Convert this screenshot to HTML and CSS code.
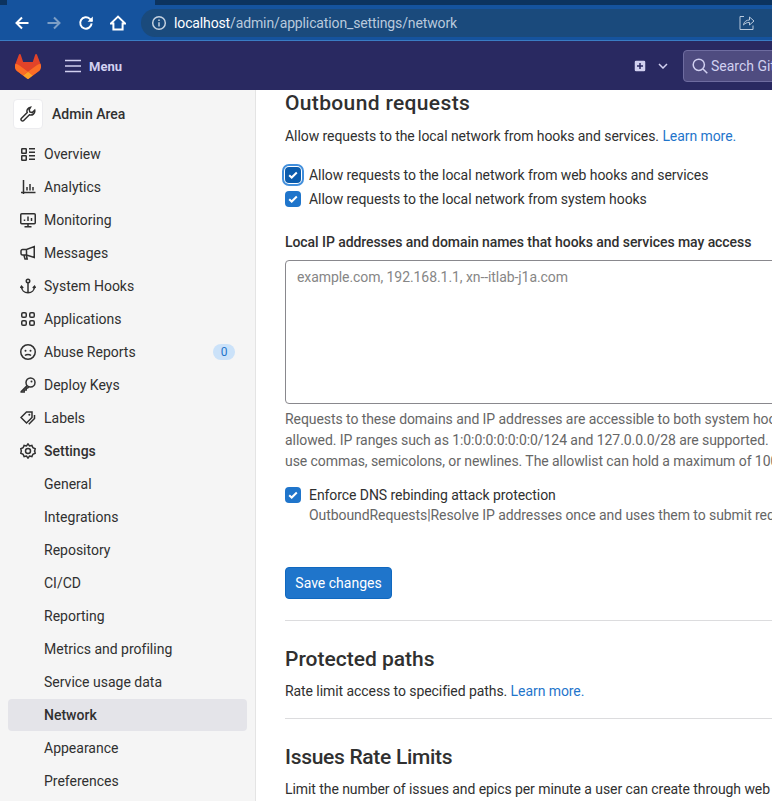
FILE: index.html
```html
<!DOCTYPE html>
<html lang="en">
<head>
  <meta charset="UTF-8" />
  <meta name="viewport" content="width=device-width, initial-scale=1" />
  <title>Network · Settings · Admin Area · GitLab</title>
  <link rel="stylesheet" href="styles.css">
</head>
<body>
  <div class="browser">
    <div class="tabstrip"><div class="tab"></div></div>
    <div class="toolbar">
      <svg class="tool tool-back" viewBox="0 0 16 16"><path d="M14.5 8H2.5M8 2.5 2.5 8 8 13.5"/></svg>
      <svg class="tool tool-forward" viewBox="0 0 16 16"><path d="M1.5 8h12M8 2.5 13.5 8 8 13.5"/></svg>
      <svg class="tool tool-reload" viewBox="0 0 16 16"><path d="M13.6 8.4A5.7 5.7 0 1 1 11.9 3.9L14 6"/><path class="solid" d="M14.8 1.6v5.2H9.6z"/></svg>
      <svg class="tool tool-home" viewBox="0 0 16 16"><path d="M8 1.6 1 8.4h2.4v6.2h9.2V8.4H15z"/></svg>
      <div class="omnibox">
        <svg class="omni-info" viewBox="0 0 16 16"><circle cx="8" cy="8" r="6.3"/><path d="M8 7.2v4.2M8 4.4v1.5"/></svg>
        <span class="url"><b>localhost</b>/admin/application_settings/network</span>
        <svg class="omni-share" viewBox="0 0 16 16"><path d="M5 1.5H1v13h13v-4"/><path d="M4.5 10c.4-3.4 3-5 6-5V2l4.5 4-4.5 4V7.4c-2.400 0-4.500.8-6 2.600z"/></svg>
        <svg class="omni-star" viewBox="0 0 16 16"><path d="m8 1.500 2 4.500 4.800.5-3.600 3.200 1 4.800L8 12.100l-4.200 2.400 1-4.800L1.200 6.500 6 6z"/></svg>
      </div>
    </div>
  </div>

  <header class="navbar">
    <svg class="logo" viewBox="0 0 25 24">
      <path d="M24.507 9.5l-.034-.09L21.082.562a.896.896 0 00-1.694.091l-2.29 7.01H7.825L5.535.653a.898.898 0 00-1.694-.09L.451 9.411.416 9.5a6.297 6.297 0 002.09 7.278l.012.01.03.022 5.16 3.867 2.56 1.935 1.554 1.176a1.051 1.051 0 001.268 0l1.555-1.176 2.56-1.935 5.197-3.89.014-.01A6.297 6.297 0 0024.507 9.5z" fill="#E24329"/>
      <path d="M24.507 9.5l-.034-.09a11.44 11.44 0 00-4.56 2.051l-7.447 5.632 4.742 3.584 5.197-3.89.014-.01A6.297 6.297 0 0024.507 9.5z" fill="#FC6D26"/>
      <path d="M7.707 20.677l2.56 1.935 1.555 1.176a1.051 1.051 0 001.268 0l1.555-1.176 2.56-1.935-4.743-3.584-4.755 3.584z" fill="#FCA326"/>
      <path d="M5.01 11.461a11.43 11.43 0 00-4.56-2.05L.416 9.5a6.297 6.297 0 002.09 7.278l.012.01.03.022 5.16 3.867 4.745-3.584-7.444-5.632z" fill="#FC6D26"/>
    </svg>
    <div class="menu">
      <svg class="menu-bars" viewBox="0 0 16 16"><path d="M0 2.500h16M0 8h16M0 13.500h16"/></svg>
      <span>Menu</span>
    </div>
    <div class="nav-right">
      <svg class="plus" viewBox="0 0 12 12"><rect width="12" height="12" rx="2"/><path d="M6 3v6M3 6h6"/></svg>
      <svg class="caret" viewBox="0 0 10 6"><path d="M1 1l4 4 4-4"/></svg>
      <div class="search">
        <svg viewBox="0 0 16 16"><circle cx="6.800" cy="6.800" r="5.600"/><path d="M11 11l4.300 4.300"/></svg>
        <span>Search GitLab</span>
      </div>
    </div>
  </header>

  <div class="layout">
    <aside class="sidebar">
      <div class="side-head">
        <span class="avatar">
          <svg class="icon" viewBox="0 0 16 16"><path d="M10.600 1.200a4 4 0 0 0-3.400 5.400L1.500 12.300a1.500 1.500 0 0 0 2.200 2.200l5.700-5.700a4 4 0 0 0 5.300-4.600l-2.500 2.400-2.400-.6-.6-2.400z"/></svg>
        </span>
        <span>Admin Area</span>
      </div>
      <nav class="side-list">
        <a class="side-item">
          <svg class="icon" viewBox="0 0 16 16"><rect x="1.750" y="2.750" width="4.500" height="4.500" rx=".5"/><rect x="1.750" y="9.750" width="4.500" height="4.500" rx=".5"/><path d="M9 2.750h6M9 6.250h6M9 9.750h6M9 13.250h6"/></svg>
          Overview</a>
        <a class="side-item">
          <svg class="icon" viewBox="0 0 16 16"><path d="M3.500 1v14M1 13.500h14.500M7 8v3.500M10 5v6.500M13 8v3.500"/></svg>
          Analytics</a>
        <a class="side-item">
          <svg class="icon" viewBox="0 0 16 16"><rect x=".75" y="1.750" width="14.500" height="10" rx="1"/><path d="M4.500 9V7.500M8 9V4.500M11.500 9V6M8 12v2.500M4.500 14.750h7"/></svg>
          Monitoring</a>
        <a class="side-item">
          <svg class="icon" viewBox="0 0 16 16"><path d="M14.250 1.500v11L6.500 10H2.500a1.500 1.500 0 0 1-1.500-1.500V6a1.500 1.500 0 0 1 1.500-1.500h4zM6.500 4.500V10M4 10.500l1 3.500h2.200l-.8-3.500"/></svg>
          Messages</a>
        <a class="side-item">
          <svg class="icon" viewBox="0 0 16 16"><circle cx="8" cy="3" r="1.750"/><path d="M8 4.750V15M1.500 8.500c0 3.800 2.800 6.250 6.500 6.250s6.500-2.450 6.500-6.250M.5 10l1-1.750L3.200 10M12.800 10l1.700-1.750 1 1.750"/></svg>
          System Hooks</a>
        <a class="side-item">
          <svg class="icon" viewBox="0 0 16 16"><rect x="1.750" y="1.750" width="4.500" height="4.500" rx="1.250"/><rect x="9.750" y="1.750" width="4.500" height="4.500" rx="1.250"/><rect x="1.750" y="9.750" width="4.500" height="4.500" rx="1.250"/><rect x="9.750" y="9.750" width="4.500" height="4.500" rx="1.250"/></svg>
          Applications</a>
        <a class="side-item">
          <svg class="icon" viewBox="0 0 16 16"><circle cx="8" cy="8" r="7.250"/><path d="M5 11.500c1.500-1.500 4.500-1.500 6 0"/><path class="dot" d="M5.500 6.800h.01M10.500 6.800h.01"/></svg>
          Abuse Reports
          <span class="badge">0</span></a>
        <a class="side-item">
          <svg class="icon" viewBox="0 0 16 16"><circle cx="10.500" cy="5.500" r="4.500"/><path d="M7.200 8.500 1.200 14.500v.5h3v-2h2v-2h1.500l1-1.200"/><path class="dot" d="M11.500 4.500h.01"/></svg>
          Deploy Keys</a>
        <a class="side-item">
          <svg class="icon" viewBox="0 0 16 16"><path d="M1 7.500 6.500 2H12v5.500l-5.500 5.500z"/><path d="M14.500 5v3.500L8.800 14.200"/><path class="dot" d="M9.300 4.800h.01"/></svg>
          Labels</a>
        <a class="side-item is-bold">
          <svg class="icon" viewBox="0 0 16 16"><path d="M8 .9l1.500 2 2.400-.5 1 2.300 2.300 1-.5 2.300 0 0 .5 0-.5 0 .5 2.300-2.300 1-1 2.300-2.400-.5L8 15.100l-1.500-2-2.400.5-1-2.300-2.300-1 .5-2.300-.5-2.300 2.300-1 1-2.300 2.400.5z"/><circle cx="8" cy="8" r="2.500"/></svg>
          Settings</a>
        <a class="side-item sub">General</a>
        <a class="side-item sub">Integrations</a>
        <a class="side-item sub">Repository</a>
        <a class="side-item sub">CI/CD</a>
        <a class="side-item sub">Reporting</a>
        <a class="side-item sub">Metrics and profiling</a>
        <a class="side-item sub">Service usage data</a>
        <a class="side-item sub active">Network</a>
        <a class="side-item sub">Appearance</a>
        <a class="side-item sub">Preferences</a>
      </nav>
    </aside>

    <main class="content">
      <section class="block">
        <h4 class="h-wide">Outbound requests</h4>
        <p class="lead">Allow requests to the local network from hooks and services. <a class="link">Learn more.</a></p>
        <div class="checks">
          <label class="check">
            <span class="box focused"><svg viewBox="0 0 10 8"><path d="M1.200 4.200 3.700 6.500 8.800 1.500"/></svg></span>
            Allow requests to the local network from web hooks and services
          </label>
          <label class="check">
            <span class="box"><svg viewBox="0 0 10 8"><path d="M1.200 4.200 3.700 6.500 8.800 1.500"/></svg></span>
            Allow requests to the local network from system hooks
          </label>
        </div>
        <label class="field-label">Local IP addresses and domain names that hooks and services may access</label>
        <div class="textarea">example.com, 192.168.1.1, xn--itlab-j1a.com</div>
        <p class="help">Requests to these domains and IP addresses are accessible to both system hooks and web hooks even when local requests are not<br>allowed. IP ranges such as 1:0:0:0:0:0:0:0/124 and 127.0.0.0/28 are supported. Domain wildcards are not supported currently.<br>use commas, semicolons, or newlines. The allowlist can hold a maximum of 1000 entries.</p>
        <label class="check check-dns">
          <span class="box"><svg viewBox="0 0 10 8"><path d="M1.200 4.200 3.700 6.500 8.800 1.500"/></svg></span>
          Enforce DNS rebinding attack protection
        </label>
        <p class="check-help">OutboundRequests|Resolve IP addresses once and uses them to submit requests</p>
        <button class="btn" type="button">Save changes</button>
      </section>
      <section class="block">
        <h4>Protected paths</h4>
        <p class="lead lead-tight">Rate limit access to specified paths. <a class="link">Learn more.</a></p>
      </section>
      <section class="block">
        <h4 class="h-narrow">Issues Rate Limits</h4>
        <p class="lead lead-tight">Limit the number of issues and epics per minute a user can create through web and API requests.</p>
      </section>
    </main>
  </div>
</body>
</html>
```

FILE: styles.css
```css
* {
  box-sizing: border-box;
}

html,
body {
  height: 100%;
}

body {
  margin: 0;
  overflow: hidden;
  display: flex;
  flex-direction: column;
  font-family: Roboto, Arial, sans-serif;
  font-size: 14px;
  color: #303030;
  background: #fff;
  font-variant-ligatures: none;
}

/* browser chrome */
.browser {
  height: 41px;
  flex-shrink: 0;
  background: #15539e;
  border-bottom: 1px solid #3a7cc4;
}

.tabstrip {
  height: 5px;
  padding-left: 7px;
  background: #0c335f;
}

.tab {
  width: 148px;
  height: 5px;
  background: #15539e;
}

.toolbar {
  display: flex;
  align-items: center;
  height: 35px;
  padding-left: 14px;
}

.tool {
  width: 16px;
  height: 16px;
  flex-shrink: 0;
  fill: none;
  stroke: #fff;
  stroke-width: 2;
}

.tool .solid {
  fill: #fff;
  stroke: none;
}

.tool-forward {
  margin-left: 16px;
  stroke: #7d9fc6;
}

.tool-reload {
  margin-left: 16px;
}

.tool-home {
  margin-left: 16px;
}

.omnibox {
  display: flex;
  align-items: center;
  flex: 1;
  height: 28px;
  margin-left: 15px;
  margin-right: -60px;
  padding-left: 10px;
  background: #1a4a7c;
  border-radius: 14px;
  color: #b9c9dc;
  font-size: 14px;
}

.omni-info {
  width: 16px;
  height: 16px;
  fill: none;
  stroke: #c5d2e0;
  stroke-width: 1.500;
}

.url {
  margin-left: 7px;
  letter-spacing: -0.13px;
}

.url b {
  font-weight: 400;
  color: #fff;
}

.omni-share {
  width: 16px;
  height: 16px;
  margin-left: auto;
  fill: none;
  stroke: #b9c9dc;
}

.omni-star {
  width: 16px;
  height: 16px;
  margin-left: 16px;
  margin-right: 45px;
  fill: none;
  stroke: #b9c9dc;
}

/* gitlab navbar */
.navbar {
  display: flex;
  align-items: center;
  height: 49px;
  flex-shrink: 0;
  padding: 1px 0 0 15px;
  background: #292961;
  color: #d1d0f0;
}

.logo {
  width: 26px;
  height: 25px;
}

.menu {
  display: flex;
  align-items: center;
  margin-left: 24px;
  font-weight: 700;
  font-size: 13px;
}

.menu-bars {
  width: 16px;
  height: 16px;
  margin-right: 8px;
  stroke: #d1d0f0;
  stroke-width: 1.500;
}

.nav-right {
  display: flex;
  align-items: center;
  margin-left: auto;
  margin-right: -60px;
}

.plus {
  width: 12px;
  height: 12px;
  fill: #d1d0f0;
  stroke: #292961;
  stroke-width: 1.500;
}

.caret {
  width: 10px;
  height: 6px;
  margin-left: 12px;
  fill: none;
  stroke: #d1d0f0;
  stroke-width: 1.500;
}

.search {
  display: flex;
  align-items: center;
  width: 149px;
  height: 32px;
  margin-left: 15px;
  padding-left: 8px;
  background: #4f4c80;
  border: 1px solid #6e6ca0;
  border-radius: 4px;
}

.search svg {
  width: 16px;
  height: 16px;
  margin-right: 3px;
  fill: none;
  stroke: #d1d0f0;
  stroke-width: 1.500;
}

/* page */
.layout {
  display: flex;
  flex: 1;
  min-height: 0;
}

.sidebar {
  width: 256px;
  flex-shrink: 0;
  padding: 9px 8px 0;
  background: #f5f5f5;
  border-right: 1px solid #e4e4e4;
  overflow: hidden;
}

.side-head {
  display: flex;
  align-items: center;
  gap: 9px;
  margin-left: 5px;
  height: 30px;
  font-weight: 500;
}

.avatar {
  display: flex;
  align-items: center;
  justify-content: center;
  width: 30px;
  height: 30px;
  background: #fff;
  border: 1px solid #ececef;
  border-radius: 4px;
}

.icon {
  width: 16px;
  height: 16px;
  flex-shrink: 0;
  fill: none;
  stroke: #303030;
  stroke-width: 1.500;
}

.icon .dot {
  stroke-width: 2;
  stroke-linecap: round;
}

.side-list {
  display: flex;
  flex-direction: column;
  gap: 1px;
  margin-top: 9px;
}

.side-item {
  display: flex;
  align-items: center;
  gap: 8px;
  height: 32px;
  padding: 0 12px;
  border-radius: 4px;
  color: #303030;
}

.side-item.is-bold {
  font-weight: 500;
}

.side-item.sub {
  padding-left: 36px;
}

.side-item.active {
  background: #e4e4e9;
  font-weight: 500;
}

.badge {
  margin-left: auto;
  width: 22px;
  height: 16px;
  border-radius: 8px;
  background: #cbe2f9;
  color: #1f75cb;
  font-size: 12px;
  line-height: 16px;
  text-align: center;
}

.content {
  flex: 1;
  min-width: 0;
  padding-left: 29px;
  overflow: hidden;
  letter-spacing: -0.07px;
}

.block {
  width: 900px;
  border-bottom: 1px solid #dcdcde;
  padding-bottom: 16px;
  margin-bottom: 25px;
}

.block:first-child {
  padding-bottom: 21px;
}

h4 {
  margin: 0;
  font-size: 21px;
  line-height: 26px;
  font-weight: 500;
  letter-spacing: 0;
}

.h-wide {
  letter-spacing: .35px;
}

.h-narrow {
  letter-spacing: -.3px;
}

.lead {
  margin: 10px 0 0;
  line-height: 21px;
}

.lead-tight {
  margin-top: 9px;
}

.link {
  color: #1f75cb;
}

.checks {
  display: flex;
  flex-direction: column;
  gap: 4px;
  margin-top: 18px;
}

.check {
  display: flex;
  align-items: center;
  gap: 8px;
  height: 20px;
}

.box {
  display: flex;
  align-items: center;
  justify-content: center;
  width: 16px;
  height: 16px;
  background: #1f75cb;
  border-radius: 4px;
}

.box svg {
  width: 10px;
  height: 8px;
  fill: none;
  stroke: #fff;
  stroke-width: 2;
}

.box.focused {
  background: #0b5cad;
  box-shadow: 0 0 0 1px #fff, 0 0 0 3px #428fdc;
}

.field-label {
  display: block;
  margin-top: 23px;
  font-weight: 500;
  line-height: 20px;
}

.textarea {
  height: 144px;
  margin-top: 8px;
  padding: 8px 11px;
  border: 1px solid #89888d;
  border-radius: 4px;
  color: #868686;
}

.help {
  margin: 5px 0 0;
  color: #666;
  line-height: 21px;
  white-space: nowrap;
}

.check-dns {
  margin-top: 13px;
}

.check-help {
  margin: 0 0 0 24px;
  color: #666;
  line-height: 21px;
  white-space: nowrap;
}

.btn {
  display: block;
  width: 107px;
  height: 32px;
  margin-top: 41px;
  padding: 0;
  background: #1f75cb;
  border: 1px solid #1068bf;
  border-radius: 4px;
  color: #fff;
  font: inherit;
}
```
